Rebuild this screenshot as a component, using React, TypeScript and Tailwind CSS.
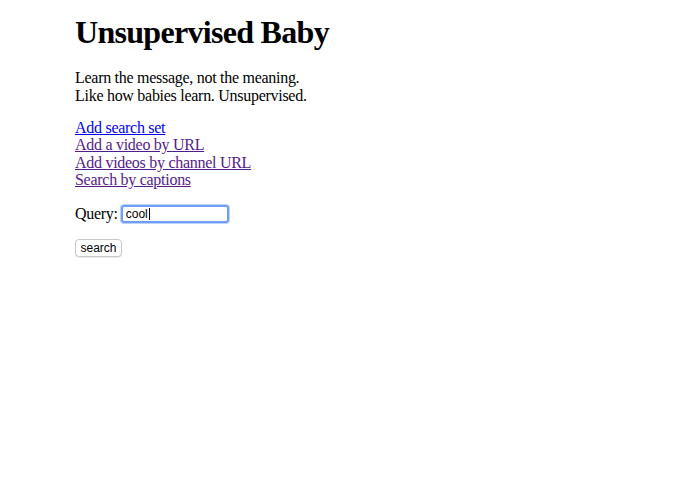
import React from "react";

export default function App() {
  return (
    <div className="min-h-[494px] bg-white pl-[75px] pt-[14px] text-black" style={{ fontFamily: '"Liberation Serif", serif' }}>
      <h1 className="text-[32px] font-bold leading-[37px] tracking-[-0.7px]">Unsupervised Baby</h1>
      <div className="mt-[18px] text-[16px] leading-[18px] tracking-[-0.28px]">
        <div>Learn the message, not the meaning.</div>
        <div>Like how babies learn. Unsupervised.</div>
      </div>
      <div className="mt-[14px] flex flex-col text-[16px] leading-[17.4px] tracking-[-0.28px]">
        <a href="#" className="underline text-[#0000ee] w-fit">Add search set</a>
        <a href="#" className="underline text-[#551a8b] w-fit">Add a video by URL</a>
        <a href="#" className="underline text-[#551a8b] w-fit">Add videos by channel URL</a>
        <a href="#" className="underline text-[#551a8b] w-fit">Search by captions</a>
      </div>
      <div className="mt-[13px] flex items-center text-[16px] tracking-[-0.28px]">
        <span>Query:</span>
        <div className="ml-[3px] flex h-[18px] w-[108px] items-center rounded-[3px] border-2 border-[#6e9ef5] px-[3px] shadow-[0_0_0_1px_#bcd2fb] tracking-normal" style={{ fontFamily: '"Liberation Sans", Arial, sans-serif' }}>
          <span className="text-[12px] leading-none">cool</span>
          <span className="ml-[1px] h-[12px] w-[1px] bg-black" />
        </div>
      </div>
      <button className="mt-[13px] h-[18px] w-[47px] rounded-[4px] border border-[#c8c8c8] bg-white px-0 text-[12px] leading-none text-black shadow-[0_1px_1px_rgba(0,0,0,0.08)]" style={{ fontFamily: '"Liberation Sans", Arial, sans-serif' }}>
        search
      </button>
    </div>
  );
}
